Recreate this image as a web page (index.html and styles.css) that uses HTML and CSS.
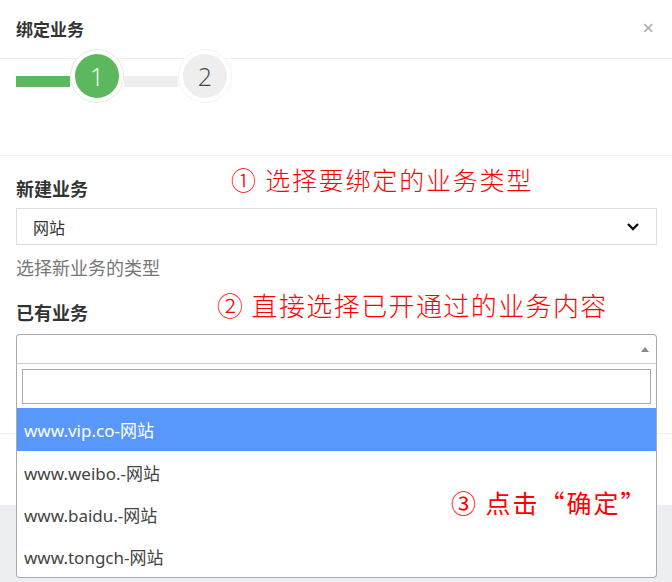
FILE: index.html
```html
<!DOCTYPE html>
<html lang="zh">
<head>
<meta charset="utf-8">
<title>绑定业务</title>
<link rel="stylesheet" href="styles.css">
</head>
<body>
<div class="page">
  <div class="modal">
    <div class="modal-header">
      <span class="modal-title">绑定业务</span>
      <span class="close">×</span>
    </div>
    <div class="steps">
      <div class="bar bar-done"></div>
      <div class="halo halo-active"><div class="step step-active">1</div></div>
      <div class="bar bar-todo"></div>
      <div class="halo"><div class="step step-todo">2</div></div>
    </div>
    <div class="modal-body">
      <div class="label">新建业务</div>
      <div class="select">
        <span>网站</span>
        <svg class="chev" width="14" height="10" viewBox="0 0 14 10"><path d="M2 2 L7 7 L12 2" fill="none" stroke="#111" stroke-width="2.4"/></svg>
      </div>
      <div class="help">选择新业务的类型</div>
      <div class="label label-2">已有业务</div>
      <div class="s2">
        <div class="s2-box">
          <span class="s2-arrow"></span>
        </div>
        <div class="s2-drop">
          <div class="s2-search-wrap"><div class="s2-search"></div></div>
          <ul class="s2-list">
            <li class="s2-opt s2-hl">www.vip.co-网站</li>
            <li class="s2-opt">www.weibo.-网站</li>
            <li class="s2-opt">www.baidu.-网站</li>
            <li class="s2-opt">www.tongch-网站</li>
          </ul>
        </div>
      </div>
    </div>
    <div class="modal-footer"></div>
  </div>
  <div class="note note-1">① 选择要绑定的业务类型</div>
  <div class="note note-2">② 直接选择已开通过的业务内容</div>
  <div class="note note-3">③ 点击“确定”</div>
</div>
</body>
</html>
```
FILE: styles.css
```css
* { box-sizing: border-box; }
html, body { margin: 0; padding: 0; }
body {
  background: #eceef2;
  font-family: "Noto Sans", "Noto Sans CJK SC", sans-serif;
  color: #333;
  width: 672px;
  height: 582px;
  overflow: hidden;
}
.page { position: relative; width: 672px; height: 582px; }
.modal { background: #fff; width: 672px; }
.modal-header {
  height: 59px;
  display: flex;
  align-items: center;
  justify-content: space-between;
  padding: 0 18px 2px 16px;
  border-bottom: 1px solid #f0f0f0;
}
.modal-title {
  font-family: "Noto Sans CJK SC", sans-serif;
  font-size: 17px;
  font-weight: 700;
  color: #333;
}
.close { font-size: 20px; color: #aaa; line-height: 1; }
.steps {
  height: 97px;
  border-bottom: 1px solid #f0f0f0;
  display: flex;
  align-items: flex-start;
  padding: 0 0 0 16px;
}
.bar { height: 11px; margin-top: 17px; }
.bar-done { width: 54px; background: #5cb85c; }
.bar-todo { width: 54px; background: #eeeeee; }
.halo {
  width: 54px;
  height: 54px;
  margin-top: -10px;
  border-radius: 50%;
  background: #fff;
  border: 1px solid #f4f4f4;
  display: flex;
  align-items: center;
  justify-content: center;
}
.halo-active { border-color: #dcefdc; }
.step {
  width: 44px;
  height: 44px;
  border-radius: 50%;
  display: flex;
  align-items: center;
  justify-content: center;
  font-family: "Open Sans", sans-serif;
  font-size: 25px;
  font-weight: 300;
}
.step-active { background: #5cb85c; color: #fff; }
.step-todo { background: #eeeeee; color: #444; }
.modal-body { height: 277px; padding: 20px 15px 0 16px; }
.label {
  font-family: "Noto Sans CJK SC", sans-serif;
  font-size: 18px;
  font-weight: 700;
  line-height: 24px;
  color: #333;
}
.select {
  margin-top: 8px;
  height: 37px;
  border: 1px solid #dcdfe6;
  display: flex;
  align-items: center;
  justify-content: space-between;
  padding: 0 16px 0 16px;
  font-family: "Noto Sans CJK SC", sans-serif;
  font-size: 16px;
  color: #333;
}
.chev { margin-top: 1px; }
.help {
  margin-top: 11px;
  font-family: "Noto Sans CJK SC", sans-serif;
  font-size: 18px;
  line-height: 22px;
  color: #777;
}
.label-2 { margin-top: 22px; }
.s2 { position: relative; margin-top: 10px; }
.s2-box {
  height: 30px;
  border: 1px solid #aaa;
  border-bottom-color: #ccc;
  border-radius: 4px 4px 0 0;
  background: #fff;
  position: relative;
}
.s2-arrow {
  position: absolute;
  right: 7px;
  top: 12px;
  width: 0;
  height: 0;
  border-left: 4px solid transparent;
  border-right: 4px solid transparent;
  border-bottom: 5px solid #888;
}
.s2-drop {
  position: absolute;
  left: 0;
  right: 0;
  top: 30px;
  background: #fff;
  border: 1px solid #aaa;
  border-top: none;
  border-radius: 0 0 4px 4px;
  z-index: 5;
}
.s2-search-wrap { padding: 5px 5px 4px 5px; }
.s2-search { height: 35px; border: 1px solid #aaa; }
.s2-list { list-style: none; margin: 0; padding: 0; }
.s2-opt {
  height: 42px;
  display: flex;
  align-items: center;
  padding: 0 7px;
  font-family: "Noto Sans", "Noto Sans CJK SC", sans-serif;
  font-size: 17px;
  color: #444;
}
.s2-hl { background: #5897fb; color: #fff; height: 43px; }
.modal-footer { height: 72px; border-top: 1px solid #eeeeee; }
.note {
  position: absolute;
  z-index: 10;
  font-family: "Noto Sans CJK SC", sans-serif;
  color: #ff0000;
  white-space: nowrap;
  line-height: 1;
}
.note-1 { left: 231px; top: 167px; font-size: 25px; letter-spacing: 1.8px; font-weight: 300; }
.note-2 { left: 217px; top: 292px; font-size: 26px; letter-spacing: 1.4px; font-weight: 300; }
.note-3 { left: 451px; top: 490px; font-size: 25px; letter-spacing: 2px; font-weight: 400; }
```
